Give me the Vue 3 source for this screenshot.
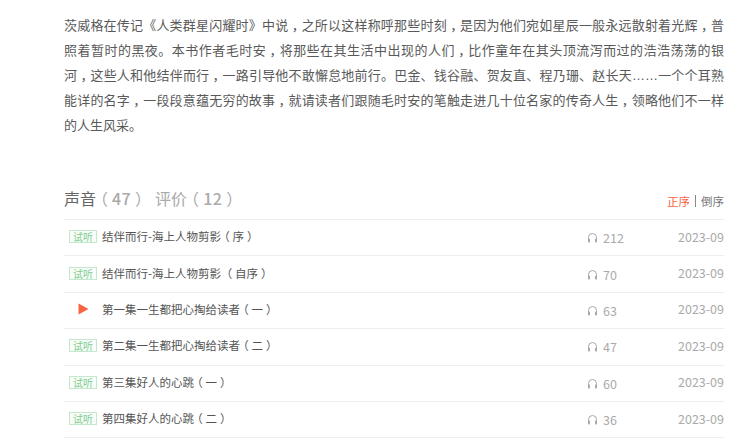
<script setup>
const lines = [
  '茨威格在传记《人类群星闪耀时》中说，之所以这样称呼那些时刻，是因为他们宛如星辰一般永远散射着光辉，普',
  '照着暂时的黑夜。本书作者毛时安，将那些在其生活中出现的人们，比作童年在其头顶流泻而过的浩浩荡荡的银',
  '河，这些人和他结伴而行，一路引导他不敢懈怠地前行。巴金、钱谷融、贺友直、程乃珊、赵长天……一个个耳熟',
  '能详的名字，一段段意蕴无穷的故事，就请读者们跟随毛时安的笔触走进几十位名家的传奇人生，领略他们不一样',
  '的人生风采。',
]
const classes = { '，': 'half', '（': 'half', '）': 'half', '…': 'dots' }
// Splits text so that punctuation can sit centred in its em box.
const parts = (text) => text.split(/([，（）]|…+)/).filter(Boolean).map((t) => ({ t, c: classes[t[0]] || '' }))
const rows = [
  { title: '结伴而行-海上人物剪影（序）', plays: 212, trial: true },
  { title: '结伴而行-海上人物剪影 （自序）', plays: 70, trial: true },
  { title: '第一集一生都把心掏给读者（一）', plays: 63, trial: false },
  { title: '第二集一生都把心掏给读者（二）', plays: 47, trial: true },
  { title: '第三集好人的心跳（一）', plays: 60, trial: true },
  { title: '第四集好人的心跳（二）', plays: 36, trial: true },
]
</script>

<template>
  <main class="page">
    <p class="desc">
      <span v-for="(line, n) in lines" :key="n" class="line"><span v-for="(p, i) in parts(line)" :key="i" :class="p.c">{{ p.t }}</span></span>
    </p>
    <header class="tabs">
      <div class="tab-group">
        <span class="tab active">声音<em><span class="half">（</span><b>47</b><span class="half">）</span></em></span>
        <span class="tab">评价<em><span class="half">（</span><b>12</b><span class="half">）</span></em></span>
      </div>
      <div class="sort"><span class="on">正序</span><i></i><span>倒序</span></div>
    </header>
    <ul class="list">
      <li v-for="r in rows" :key="r.title" class="row">
        <div class="mark">
          <span v-if="r.trial" class="badge">试听</span>
          <svg v-else class="play" width="11" height="12" viewBox="0 0 11 12"><path d="M0.5 0.5 L10.5 6 L0.5 11.5 Z" fill="#f86442"/></svg>
        </div>
        <span class="title"><span v-for="(p, i) in parts(r.title)" :key="i" :class="p.c">{{ p.t }}</span></span>
        <span class="plays">
          <svg width="11" height="11" viewBox="0 0 11 11" fill="none">
            <path d="M1.5 8 V5.5 a4 4 0 0 1 8 0 V8" stroke="#a9a9a9" stroke-width="1"/>
            <rect x="1" y="6.5" width="2" height="4" rx="0.8" fill="#a9a9a9"/>
            <rect x="8" y="6.5" width="2" height="4" rx="0.8" fill="#a9a9a9"/>
          </svg>
          {{ r.plays }}
        </span>
        <span class="date">2023-09</span>
      </li>
    </ul>
  </main>
</template>

<style>
body { background: #fff; overflow: hidden; }
</style>

<style scoped>
.page {
  width: 660px;
  margin-left: 64px;
  padding-top: 13px;
  font-family: "Noto Sans CJK SC", "Noto Sans", sans-serif;
}
.half { font-feature-settings: "halt"; padding: 0 0.25em; }
.dots { font-family: "Liberation Sans", sans-serif; }
.desc {
  margin: 0;
  font-size: 13px;
  line-height: 24.8px;
  color: #595959;
}
.line { display: block; text-align: justify; text-align-last: justify; white-space: nowrap; }
.line:last-child { text-align-last: left; }
.tabs {
  display: flex;
  justify-content: space-between;
  align-items: center;
  margin-top: 41px;
  height: 40px;
  border-bottom: 1px solid #eee;
}
.tab-group { display: flex; gap: 8px; padding-bottom: 2px; }
.tab { font-size: 16px; color: #aaa; }
.tab.active { color: #666; }
.tab em { font-style: normal; color: #aaa; }
.tab b { font-weight: 500; letter-spacing: 0.4px; }
.sort { display: flex; align-items: center; font-size: 11.5px; color: #777; padding-top: 4px; }
.sort .on { color: #f86442; }
.sort i { width: 1px; height: 12px; background: #888; margin: 0 5px; }
.list { list-style: none; margin: 0; padding: 0; }
.row {
  display: flex;
  align-items: center;
  height: 36.4px;
  box-sizing: border-box;
  border-bottom: 1px solid #eee;
}
.mark { width: 38px; flex: none; display: flex; justify-content: flex-start; padding-left: 5px; box-sizing: border-box; padding-bottom: 2px; }
.badge {
  width: 28px;
  height: 13px;
  box-sizing: border-box;
  border: 1px solid #c4e8cc;
  font-size: 10px;
  line-height: 11px;
  text-align: center;
  color: #7fcc91;
  background: #f9fdf9;
}
.play { margin-left: 9px; }
.title { flex: 1; font-size: 11.5px; color: #555; padding-bottom: 3px; }
.plays { width: 80px; font-size: 12.5px; color: #aaa; display: flex; align-items: center; gap: 5px; }
.date { width: 57px; text-align: right; font-size: 12.5px; color: #aaa; padding-bottom: 3px; }
</style>
